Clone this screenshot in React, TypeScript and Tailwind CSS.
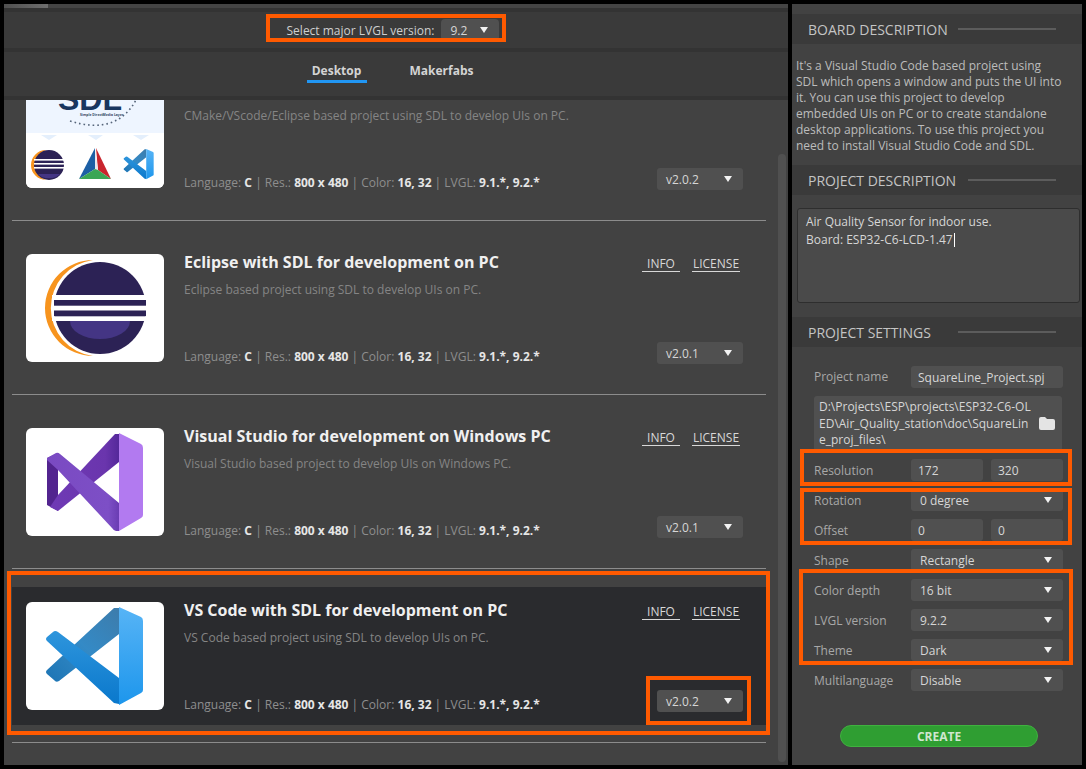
const FONT = "font-['Open_Sans','Noto_Sans',sans-serif]";

function Caret() {
  return (
    <svg width="8" height="6" viewBox="0 0 8 6" className="shrink-0">
      <path d="M0 0H8L4 6Z" fill="#f2f2f2" />
    </svg>
  );
}

function Select({ value, className }: { value: string; className?: string }) {
  return (
    <div className={`flex h-[22px] items-center justify-between rounded-[3px] bg-[#505050] pl-[9px] pr-[11px] text-[12px] text-[#d6d6d6] ${className ?? ""}`}>
      <span className="pt-px">{value}</span>
      <Caret />
    </div>
  );
}

function Input({ value, className }: { value: string; className?: string }) {
  return (
    <div className={`flex h-[22px] items-center rounded-[3px] bg-[#505050] pl-[7px] pt-px text-[12px] text-[#d6d6d6] ${className ?? ""}`}>
      {value}
    </div>
  );
}

function SectionHeader({ title, line }: { title: string; line: string }) {
  return (
    <div className="flex h-[30px] shrink-0 items-center justify-between bg-[#3a3a3a] pl-4 pr-[26px]">
      <span className="pt-[2px] text-[14px] leading-none text-[#c4c4c4]">{title}</span>
      <div className={`h-[2px] bg-[#5c5c5c] ${line}`} />
    </div>
  );
}

function SettingRow({ label, tight, children }: { label: string; tight?: boolean; children: React.ReactNode }) {
  return (
    <div className="flex h-[22px] items-center">
      <span className={`w-[97px] text-[12px] text-[#a8a8a8] ${tight ? "pb-px" : "pt-px"}`}>{label}</span>
      <div className="flex w-[152px] gap-2">{children}</div>
    </div>
  );
}

function EclipseLogo() {
  return (
    <svg viewBox="0 0 138 108" className="h-[108px] w-[138px]">
      <path d="M67 6A48 48 0 0 0 67 102A48.4 48.4 0 0 1 67 6Z" fill="#f7941e" />
      <circle cx="74" cy="54" r="46" fill="#2c2255" />
      <path d="M44 67a30 18 0 0 0 60 0Z" fill="#443584" />
      <rect x="26" y="41" width="96" height="5" fill="#fff" />
      <rect x="28" y="46" width="92" height="5.7" fill="#2c2255" />
      <rect x="26" y="51.7" width="96" height="5" fill="#fff" />
      <rect x="28" y="56.7" width="92" height="5.6" fill="#2c2255" />
      <rect x="26" y="62.3" width="96" height="4.7" fill="#fff" />
    </svg>
  );
}

function VsLogo() {
  return (
    <svg viewBox="0 0 138 108" className="h-[108px] w-[138px]">
      <defs>
        <linearGradient id="vsUp" x1="0" y1="0" x2="1" y2="0">
          <stop offset="0" stopColor="#6f3ab5" />
          <stop offset="0.8" stopColor="#6a35ad" />
          <stop offset="1" stopColor="#54289a" />
        </linearGradient>
        <linearGradient id="vsDown" x1="0" y1="0" x2="1" y2="0">
          <stop offset="0" stopColor="#7a4ac2" />
          <stop offset="0.85" stopColor="#7d4fc6" />
          <stop offset="1" stopColor="#6a3cb3" />
        </linearGradient>
      </defs>
      <path d="M21 30 32 25V83L21 77Z" fill="#52248f" />
      <path d="M32 67 89 6 93 6V34L32 83 24 79Z" fill="url(#vsUp)" />
      <path d="M21 30 30 25Q32 24 34 26L93 75V103H90Q88 103 86 100L32 42 21 32Z" fill="url(#vsDown)" />
      <path d="M93 5 115 16Q117 17 117 20V87Q117 89 115 90L93 103Z" fill="#b27af0" />
    </svg>
  );
}

// shared between the big VS Code tile and the small one on the SDL tile
function VsCodeMark({ prefix }: { prefix: string }) {
  return (
    <>
      <defs>
        <linearGradient id={`${prefix}Panel`} x1="0" y1="0" x2="0" y2="1">
          <stop offset="0" stopColor="#57b4f6" />
          <stop offset="1" stopColor="#1d96ec" />
        </linearGradient>
        <linearGradient id={`${prefix}Up`} x1="1" y1="0" x2="0" y2="1">
          <stop offset="0" stopColor="#3d7cab" />
          <stop offset="0.5" stopColor="#348ac6" />
          <stop offset="1" stopColor="#1c74b4" />
        </linearGradient>
        <linearGradient id={`${prefix}Down`} x1="0" y1="0" x2="0" y2="1">
          <stop offset="0" stopColor="#2e95dc" />
          <stop offset="1" stopColor="#0a78cc" />
        </linearGradient>
      </defs>
      <path d="M88 6H93V32L33 79Q30 81 28 78L21 72Q19 70 21 68Z" fill={`url(#${prefix}Up)`} />
      <path d="M21 39Q19 37 21 35L27 30Q29 28 32 30L93 76V102L88 101Z" fill={`url(#${prefix}Down)`} />
      <path d="M93 5 115 15Q117 16 117 19V88Q117 90 115 91L93 103Z" fill={`url(#${prefix}Panel)`} />
    </>
  );
}

function VsCodeLogo() {
  return (
    <svg viewBox="0 0 138 108" className="h-[108px] w-[138px]">
      <VsCodeMark prefix="big" />
    </svg>
  );
}

function SdlLogo() {
  return (
    <div className="relative h-[108px] w-[138px] overflow-hidden bg-white">
      <div className="absolute left-0 right-0 top-0 h-[53px] bg-[#eef5ff]" />
      <span className="absolute left-[32px] top-[3px] font-['Liberation_Sans',sans-serif] text-[32px] font-bold leading-none text-[#18365f]">SDL</span>
      <svg viewBox="0 0 138 108" className="absolute inset-0">
        <text x="54" y="36" fontSize="3.4" fontWeight="700" fill="#33465f">Simple DirectMedia Layer</text>
        <path d="M44 41Q92 56 111 18" fill="none" stroke="#56657a" strokeWidth="1.6" strokeDasharray="1.6 3" />
        <path d="M15 55h16l-8 5ZM62 55h15l-7 5ZM107 55h16l-8 5Z" fill="#e4effc" />
        <path d="M20 70A15 15 0 0 0 20 100A16 16 0 0 1 20 70Z" fill="#f7941e" />
        <circle cx="23" cy="85" r="15" fill="#2c2255" />
        <path d="M12 94a12 7 0 0 0 22 0Z" fill="#443584" />
        <rect x="8" y="79" width="30" height="1.6" fill="#fff" />
        <rect x="8" y="83" width="30" height="1.6" fill="#fff" />
        <rect x="8" y="87" width="30" height="1.6" fill="#fff" />
        <path d="M69 68 53 99 69 89Z" fill="#1c5fa5" />
        <path d="M70 68 85 99 72 90Z" fill="#c9252e" />
        <path d="M69 68 72 90 69 89Z" fill="#e8e8ee" />
        <path d="M53 99 69 89 72 90 85 99Z" fill="#3aa655" />
        <g transform="translate(91.4 67.4) scale(0.31)">
          <VsCodeMark prefix="small" />
        </g>
      </svg>
    </div>
  );
}

interface Project {
  title: string;
  desc: string;
  version: string;
  logo: React.ReactNode;
  selected?: boolean;
  links?: boolean;
}

const projects: Project[] = [
  { title: "", desc: "CMake/VScode/Eclipse based project using SDL to develop UIs on PC.", version: "v2.0.2", logo: <SdlLogo /> },
  { title: "Eclipse with SDL for development on PC", desc: "Eclipse based project using SDL to develop UIs on PC.", version: "v2.0.1", logo: <EclipseLogo />, links: true },
  { title: "Visual Studio for development on Windows PC", desc: "Visual Studio based project to develop UIs on Windows PC.", version: "v2.0.1", logo: <VsLogo />, links: true },
  { title: "VS Code with SDL for development on PC", desc: "VS Code based project using SDL to develop UIs on PC.", version: "v2.0.2", logo: <VsCodeLogo />, links: true, selected: true },
];

function ProjectCard({ p }: { p: Project }) {
  return (
    <div className="border-b border-[#8c8c8c] pb-[17px] pt-[18px]">
      <div className={`flex h-[138px] items-center pl-[14px] pr-[23px] ${p.selected ? "bg-[#2a2b2e]" : ""}`}>
        <div className="h-[108px] w-[138px] shrink-0 overflow-hidden rounded-[6px] bg-white">{p.logo}</div>
        <div className="ml-5 flex h-[108px] flex-1 flex-col">
          <div className="flex h-[16px] items-center justify-between">
            <h3 className="text-[16px] font-bold leading-none text-[#f0f0f0]">{p.title}</h3>
            {p.links && (
              <div className="mr-[3px] mt-[4px] flex gap-[12px] text-[12px] leading-[14px] text-[#d8d8d8]">
                <span className="w-[38px] border-b border-[#d8d8d8] text-center">INFO</span>
                <span className="w-[48px] border-b border-[#d8d8d8] text-center">LICENSE</span>
              </div>
            )}
          </div>
          <p className="mt-[12px] text-[12px] leading-4 text-[#858585]">{p.desc}</p>
          <div className="mt-auto flex items-end justify-between">
            <p className="mb-[-3px] text-[12px] leading-4 text-[#8e8e8e]">
              Language: <b className="text-[#e6e6e6]">C</b> | Res.: <b className="text-[#e6e6e6]">800 x 480</b> | Color: <b className="text-[#e6e6e6]">16, 32</b> | LVGL: <b className="text-[#e6e6e6]">9.1.*, 9.2.*</b>
            </p>
            <Select value={p.version} className="mb-[-2px] w-[86px] text-[#c4c4c4]" />
          </div>
        </div>
      </div>
    </div>
  );
}

function Frame({ className }: { className: string }) {
  return <div className={`pointer-events-none absolute border-4 border-[#ff5a00] ${className}`} />;
}

export default function App() {
  return (
    <div className={`relative flex h-[769px] w-[1086px] gap-1 overflow-hidden bg-black p-1 ${FONT}`}>
      {/* left: project picker */}
      <div className="flex h-[761px] w-[784px] flex-col bg-[#333333]">
        <div className="h-1 shrink-0 bg-[#444444]">
          <div className="h-1 w-[44px] bg-gradient-to-r from-[#505050] to-[#6e6e6e]" />
        </div>
        <div className="mt-1 flex h-[36px] shrink-0 items-center justify-center bg-[#3a3a3a] pr-[6px] text-[12px] text-[#cfcfcf]">
          <span className="mr-[7px] pt-[2px]">Select major LVGL version:</span>
          <Select value="9.2" className="w-[58px] rounded-[4px]" />
        </div>
        <div className="mt-1 flex h-[44px] shrink-0 justify-center gap-[43px] bg-[#3a3a3a] pr-[12px] text-[12px] font-bold text-[#d4d4d4]">
          <div className="relative flex w-[60px] justify-center pt-[10px]">
            Desktop
            <div className="absolute bottom-[13px] left-0 h-[3px] w-[60px] bg-[#2196f3]" />
          </div>
          <div className="flex justify-center pt-[10px]">Makerfabs</div>
        </div>
        <div className="mt-1 flex min-h-0 flex-1 overflow-hidden bg-[#424242]">
          <div className="ml-2 mt-[-53px] w-[754px]">
            {projects.map((p) => (
              <ProjectCard key={p.desc} p={p} />
            ))}
          </div>
          <div className="ml-3 mt-[54px] h-[608px] w-2 rounded-full bg-[#505050]" />
        </div>
      </div>

      {/* right: settings */}
      <div className="flex h-[761px] w-[290px] flex-col bg-[#424242]">
        <div className="h-[10px] shrink-0" />
        <SectionHeader title="BOARD DESCRIPTION" line="w-[98px]" />
        <p className="h-[121px] shrink-0 px-1 pt-[14px] text-[12px] leading-4 text-[#bcbcbc]">
          It's a Visual Studio Code based project using<br />
          SDL which opens a window and puts the UI into<br />
          it. You can use this project to develop<br />
          embedded UIs on PC or to create standalone<br />
          desktop applications. To use this project you<br />
          need to install Visual Studio Code and SDL.
        </p>
        <SectionHeader title="PROJECT DESCRIPTION" line="w-[88px]" />
        <div className="h-[122px] shrink-0 px-[5px] pt-[13px]">
          <div className="h-[95px] w-[283px] rounded-[3px] border border-[#2e2e2e] bg-[#4a4a4a] px-2 pt-[5px] text-[12px] leading-4 text-[#d6d6d6]">
            Air Quality Sensor for indoor use.<br />
            Board: ESP32-C6-LCD-1.47<span className="ml-px inline-block h-[14px] w-px translate-y-[3px] bg-white" />
          </div>
        </div>
        <SectionHeader title="PROJECT SETTINGS" line="w-[98px]" />
        <div className="flex flex-1 flex-col gap-2 pl-[22px] pt-[19px]">
          <SettingRow label="Project name" tight><Input value="SquareLine_Project.spj" className="w-full" /></SettingRow>
          <div className="relative h-[55px] w-[248px] rounded-[3px] bg-[#505050] pl-[5px] pt-[3px] text-[12px] leading-[16.5px] text-[#d6d6d6]">
            D:\Projects\ESP\projects\ESP32-C6-OL<br />
            ED\Air_Quality_station\doc\SquareLin<br />
            e_proj_files\
            <svg width="16" height="13" viewBox="0 0 16 13" className="absolute right-[7px] top-[21px]">
              <path d="M0 2q0-2 2-2h4l2 2h6q2 0 2 2v7q0 2-2 2H2q-2 0-2-2Z" fill="#e4e4e4" />
            </svg>
          </div>
          <SettingRow label="Resolution">
            <Input value="172" className="flex-1" />
            <Input value="320" className="flex-1" />
          </SettingRow>
          <SettingRow label="Rotation"><Select value="0 degree" className="w-full" /></SettingRow>
          <SettingRow label="Offset">
            <Input value="0" className="flex-1" />
            <Input value="0" className="flex-1" />
          </SettingRow>
          <SettingRow label="Shape"><Select value="Rectangle" className="w-full" /></SettingRow>
          <SettingRow label="Color depth"><Select value="16 bit" className="w-full" /></SettingRow>
          <SettingRow label="LVGL version"><Select value="9.2.2" className="w-full" /></SettingRow>
          <SettingRow label="Theme"><Select value="Dark" className="w-full" /></SettingRow>
          <SettingRow label="Multilanguage"><Select value="Disable" className="w-full" /></SettingRow>
          <button className="ml-[26px] mt-[26px] h-[22px] w-[198px] rounded-full border border-[#3fb23f] bg-[#2f9e32] pt-px text-[12px] font-bold text-[#cfe6cf]">
            CREATE
          </button>
        </div>
      </div>

      {/* orange callouts */}
      <Frame className="left-[266px] top-[14px] h-[28px] w-[240px]" />
      <Frame className="left-[7px] top-[571px] h-[164px] w-[763px]" />
      <Frame className="left-[646px] top-[676px] h-[49px] w-[105px]" />
      <Frame className="left-[800px] top-[449px] h-[37px] w-[272px]" />
      <Frame className="left-[800px] top-[488px] h-[57px] w-[272px]" />
      <Frame className="left-[799px] top-[569px] h-[96px] w-[274px]" />
    </div>
  );
}
